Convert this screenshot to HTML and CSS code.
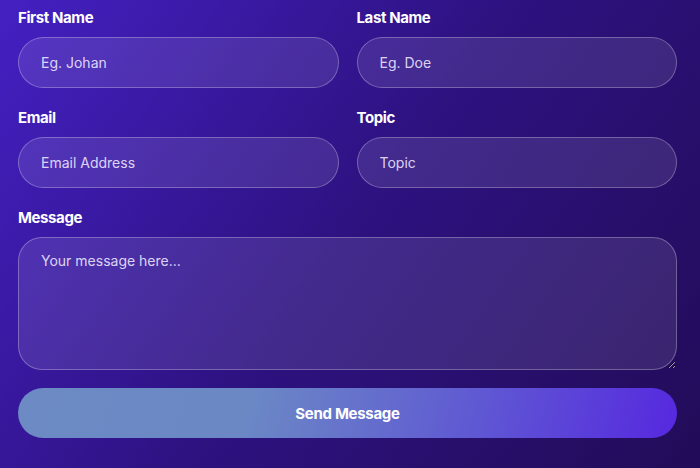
FILE: index.html
```html
<!DOCTYPE html>
<html lang="en">
<head>
    <meta charset="UTF-8">
    <meta name="viewport" content="width=device-width, initial-scale=1.0">
    <title>Contact</title>
    <link rel="stylesheet" href="styles.css">
</head>
<body>

<form class="contact">
    <div class="row">
        <div class="field">
            <label for="first">First Name</label>
            <input id="first" type="text" placeholder="Eg. Johan">
        </div>
        <div class="field">
            <label for="last">Last Name</label>
            <input id="last" type="text" placeholder="Eg. Doe">
        </div>
    </div>
    <div class="row">
        <div class="field">
            <label for="email">Email</label>
            <input id="email" type="email" placeholder="Email Address">
        </div>
        <div class="field">
            <label for="topic">Topic</label>
            <input id="topic" type="text" placeholder="Topic">
        </div>
    </div>
    <div class="field">
        <label for="message">Message</label>
        <textarea id="message" placeholder="Your message here..."></textarea>
    </div>
    <button type="button" class="send">Send Message</button>
</form>

</body>
</html>
```

FILE: styles.css
```css
html {
    height: 100%;
}

body {
    margin: 0;
    min-height: 100%;
    padding: 8px 0 0 18px;
    box-sizing: border-box;
    background: linear-gradient(125deg, #4420c2 0%, #2d1280 50%, #220c58 100%);
    font-family: Inter, "Noto Sans", sans-serif;
}

.contact {
    display: flex;
    flex-direction: column;
    width: 659px;
}

.row {
    display: flex;
    gap: 18px;
}

.row .field {
    flex: 1;
}

.field {
    display: flex;
    flex-direction: column;
    margin-bottom: 20px;
}

label {
    color: #fff;
    font-size: 15px;
    font-weight: 700;
    line-height: 20px;
    letter-spacing: -0.4px;
    margin-bottom: 9px;
}

input,
textarea {
    box-sizing: border-box;
    width: 100%;
    font-family: Inter, "Noto Sans", sans-serif;
    font-size: 14px;
    color: #fff;
    background: rgba(255, 255, 255, 0.1);
    border: 1px solid rgba(255, 255, 255, 0.28);
    border-radius: 26px;
    padding: 0 22px;
    outline: none;
}

input {
    height: 51px;
}

textarea {
    height: 133px;
    padding-top: 14px;
    border-radius: 24px;
}

input::placeholder,
textarea::placeholder {
    color: rgba(238, 232, 255, 0.9);
}

.send {
    margin-top: -2px;
    height: 50px;
    border: none;
    border-radius: 25px;
    background: linear-gradient(105deg, #6c8ac3 0%, #6b88c5 35%, #5f57d3 70%, #5628df 100%);
    color: #fff;
    font-family: Inter, "Noto Sans", sans-serif;
    font-size: 15px;
    font-weight: 700;
    letter-spacing: -0.3px;
}
```
